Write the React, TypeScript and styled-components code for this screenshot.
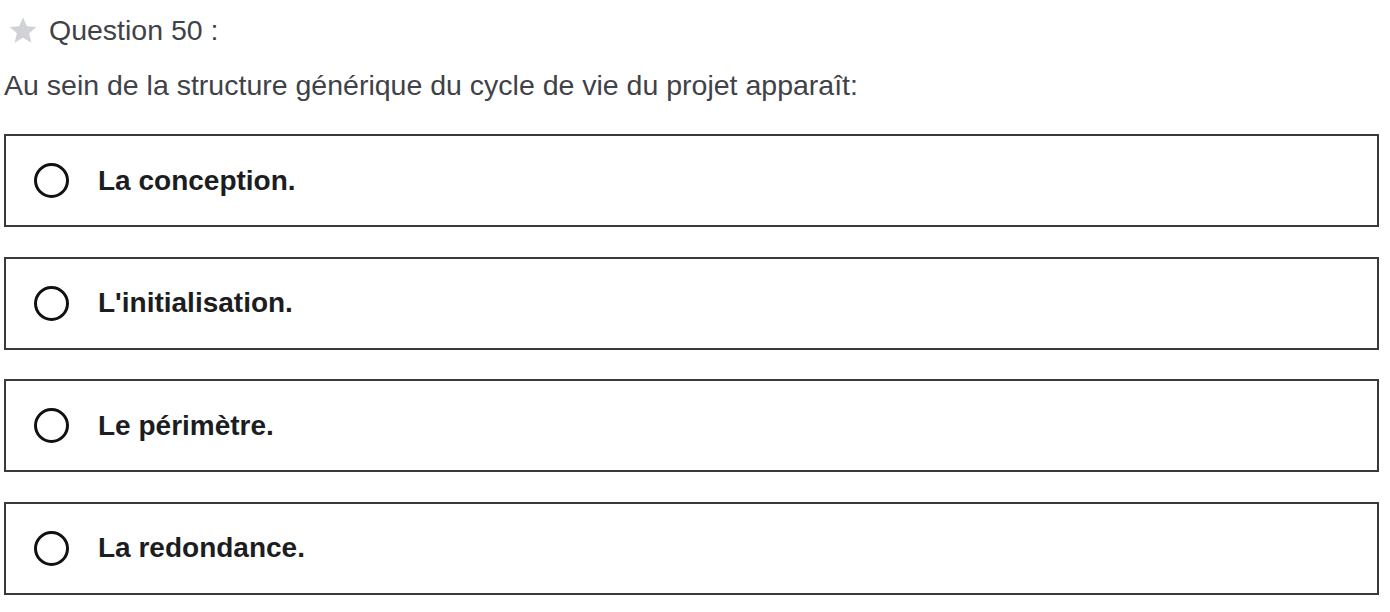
import { createGlobalStyle, styled } from "styled-components";

const GlobalStyle = createGlobalStyle`
  body {
    margin: 0;
    background: #fff;
    font-family: "Liberation Sans", Arial, sans-serif;
  }
`;

const options = [
  "La conception.",
  "L'initialisation.",
  "Le périmètre.",
  "La redondance.",
];

export default function App() {
  return (
    <>
      <GlobalStyle />
      <Page>
        <Header>
          <StarIcon viewBox="0 0 24 24">
            <path d="M12 1.8l3.1 7.2 7.6.6-5.8 5 1.8 7.6L12 18.2l-6.7 4 1.8-7.6-5.8-5 7.6-.6z" />
          </StarIcon>
          <HeaderText>Question 50 :</HeaderText>
        </Header>
        <Prompt>
          Au sein de la structure générique du cycle de vie du projet apparaît:
        </Prompt>
        <OptionList>
          {options.map((option) => (
            <Option key={option}>
              <Radio />
              <OptionLabel>{option}</OptionLabel>
            </Option>
          ))}
        </OptionList>
      </Page>
    </>
  );
}

const Page = styled.div`
  width: 1390px;
  height: 612px;
  padding: 15px 11px 0 4px;
  box-sizing: border-box;
  overflow: hidden;
`;

const Header = styled.div`
  display: flex;
  align-items: center;
  gap: 11px;
  padding-left: 4px;
  height: 30px;
`;

const StarIcon = styled.svg`
  width: 30px;
  height: 30px;
  fill: #d0d2d6;
`;

const HeaderText = styled.span`
  font-size: 28.5px;
  color: #3f4248;
`;

const Prompt = styled.p`
  margin: 25px 0 0;
  font-size: 28.5px;
  line-height: 30px;
  color: #3f4248;
`;

const OptionList = styled.div`
  display: flex;
  flex-direction: column;
  gap: 29.5px;
  margin-top: 34px;
`;

const Option = styled.div`
  display: flex;
  align-items: center;
  gap: 29px;
  height: 93px;
  box-sizing: border-box;
  border: 2px solid #3a3a3a;
  padding-left: 28px;
`;

const Radio = styled.span`
  width: 35px;
  height: 35px;
  box-sizing: border-box;
  border: 3px solid #111;
  border-radius: 50%;
  flex-shrink: 0;
`;

const OptionLabel = styled.span`
  font-size: 28px;
  font-weight: 700;
  color: #1c1d1f;
`;
